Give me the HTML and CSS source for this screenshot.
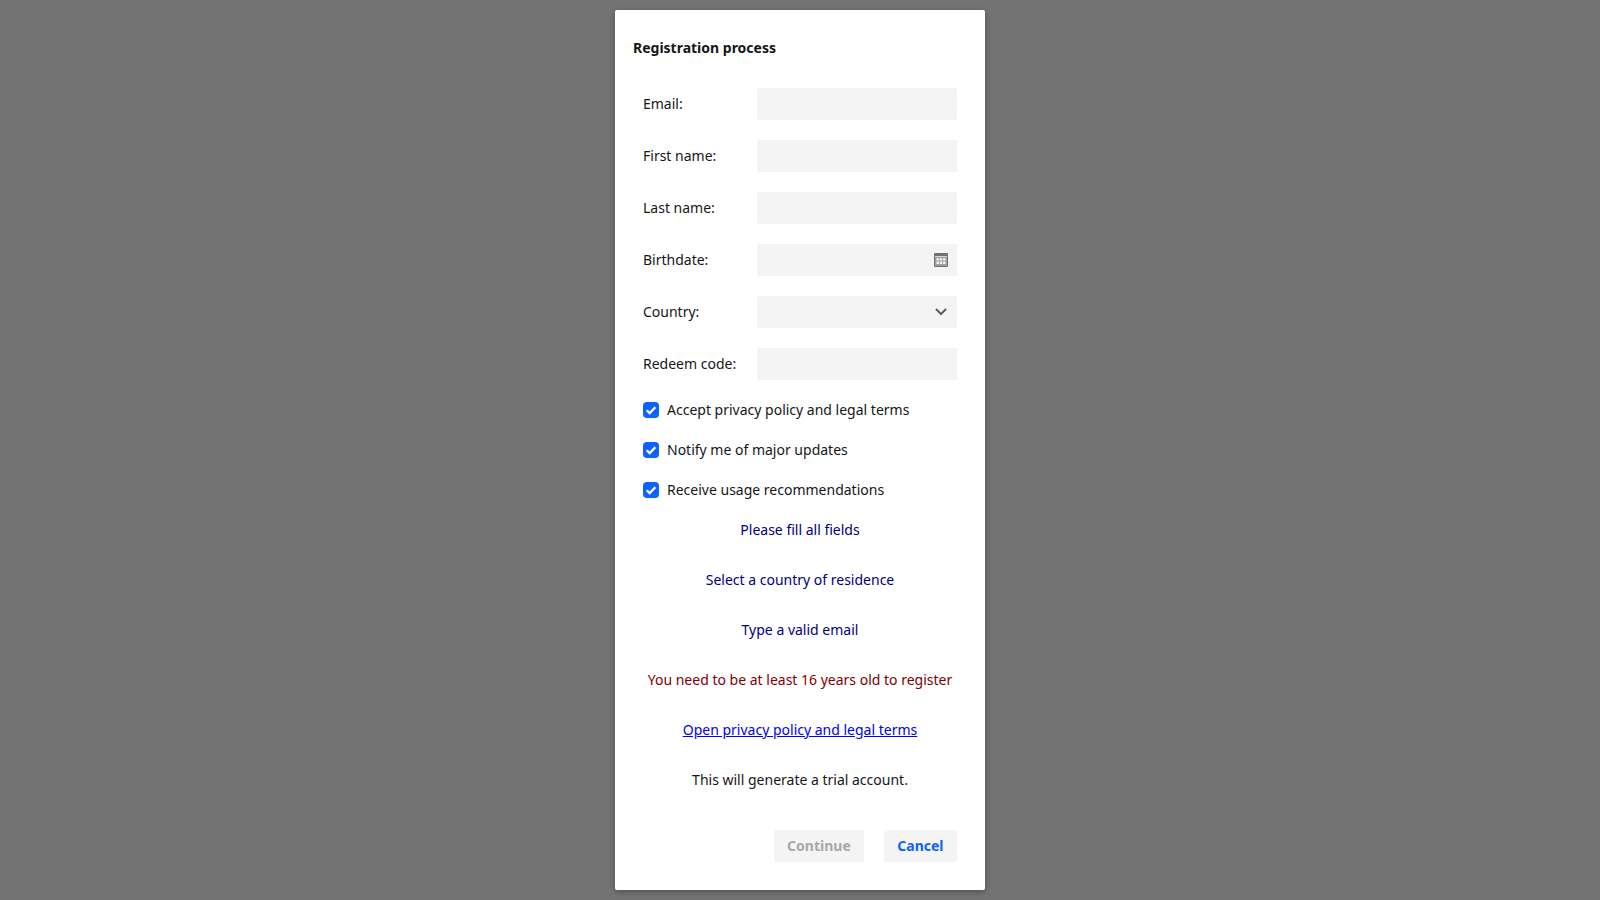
FILE: index.html
```html
<!DOCTYPE html>
<html lang="en">
<head>
<meta charset="utf-8">
<title>Registration process</title>
<link rel="stylesheet" href="styles.css">
</head>
<body>
<main class="modal">
  <h1 class="title">Registration process</h1>
  <form class="form">
    <div class="rows">
      <label class="row"><span class="label">Email:</span><span class="field"></span></label>
      <label class="row"><span class="label">First name:</span><span class="field"></span></label>
      <label class="row"><span class="label">Last name:</span><span class="field"></span></label>
      <label class="row"><span class="label">Birthdate:</span><span class="field">
        <svg class="cal" viewBox="0 0 14 14" width="14" height="14"><rect width="14" height="14" rx="1" fill="#6f6f6f"/><rect x="1" y="3" width="12" height="1" fill="#d6d6d6"/><rect x="1" y="4" width="12" height="9" fill="#a0a0a0"/><path fill="#f4f4f4" d="M2.500 5.200h2.400v2.400H2.500zM5.800 5.200h2.400v2.400H5.800zM9.100 5.200h2.400v2.400H9.100zM2.500 8.600h2.400v2.400H2.500zM5.800 8.600h2.400v2.400H5.800zM9.100 8.600h2.400v2.400H9.100z"/></svg>
      </span></label>
      <label class="row"><span class="label">Country:</span><span class="field field-select">
        <svg class="chev" viewBox="0 0 12 8" width="12" height="8"><path fill="none" stroke="#5f5f5f" stroke-width="2" d="M1 1l5 5 5-5"/></svg>
      </span></label>
      <label class="row"><span class="label">Redeem code:</span><span class="field"></span></label>
    </div>
    <div class="checks">
      <label class="check"><span class="box"><svg viewBox="0 0 16 16" width="16" height="16"><path fill="none" stroke="#fff" stroke-width="2.200" d="M3.700 8.200l3 2.900L12.300 5.200"/></svg></span>Accept privacy policy and legal terms</label>
      <label class="check"><span class="box"><svg viewBox="0 0 16 16" width="16" height="16"><path fill="none" stroke="#fff" stroke-width="2.200" d="M3.700 8.200l3 2.900L12.300 5.200"/></svg></span>Notify me of major updates</label>
      <label class="check"><span class="box"><svg viewBox="0 0 16 16" width="16" height="16"><path fill="none" stroke="#fff" stroke-width="2.200" d="M3.700 8.200l3 2.900L12.300 5.200"/></svg></span>Receive usage recommendations</label>
    </div>
    <div class="messages">
      <p class="msg info">Please fill all fields</p>
      <p class="msg info">Select a country of residence</p>
      <p class="msg info">Type a valid email</p>
      <p class="msg error">You need to be at least 16 years old to register</p>
      <p class="msg"><a class="link" href="#">Open privacy policy and legal terms</a></p>
      <p class="msg">This will generate a trial account.</p>
    </div>
    <div class="actions">
      <button class="btn disabled" type="button" disabled>Continue</button>
      <button class="btn cancel" type="button">Cancel</button>
    </div>
  </form>
</main>
</body>
</html>
```
FILE: styles.css
```css
* { box-sizing: border-box; }
html, body { height: 100%; }
body {
  margin: 0;
  background: #737373;
  font-family: "Noto Sans", sans-serif;
  font-size: 14px;
  line-height: 20px;
  color: #161616;
  display: flex;
  align-items: center;
  justify-content: center;
}
.modal {
  width: 370px;
  height: 880px;
  background: #fff;
  border-radius: 2px;
  box-shadow: 0 2px 6px rgba(0, 0, 0, 0.3);
  padding: 28px 28px 28px 18px;
  display: flex;
  flex-direction: column;
}
.title {
  margin: 0;
  font-size: 14px;
  line-height: 20px;
  font-weight: 700;
}
.form {
  flex: 1;
  padding-left: 10px;
  margin-top: 30px;
  display: flex;
  flex-direction: column;
}
.rows { display: flex; flex-direction: column; gap: 20px; }
.row { display: flex; align-items: center; justify-content: space-between; height: 32px; }
.field {
  width: 200px;
  height: 32px;
  background: #f4f4f4;
  border-radius: 2px;
  display: flex;
  align-items: center;
  justify-content: flex-end;
  padding-right: 9px;
}
.field-select { padding-right: 10px; }
.checks { margin-top: 20px; display: flex; flex-direction: column; gap: 20px; }
.check { display: flex; align-items: center; gap: 8px; height: 20px; }
.box { width: 16px; height: 16px; border-radius: 4px; background: #0f62fe; display: block; }
.box svg { display: block; }
.messages { margin-top: 20px; display: flex; flex-direction: column; gap: 30px; }
.msg { margin: 0; text-align: center; }
.info { color: #00007f; }
.error { color: #7f0000; }
.link { color: #0000ee; }
.actions { margin-top: auto; display: flex; justify-content: flex-end; gap: 20px; }
.btn {
  height: 32px;
  padding: 0 13.500px;
  border: 0;
  border-radius: 2px;
  background: #f4f4f4;
  font: 700 14px/20px "Noto Sans", sans-serif;
}
.disabled { color: #a8a8a8; padding: 0 13px; }
.cancel { color: #0f62fe; }
```
